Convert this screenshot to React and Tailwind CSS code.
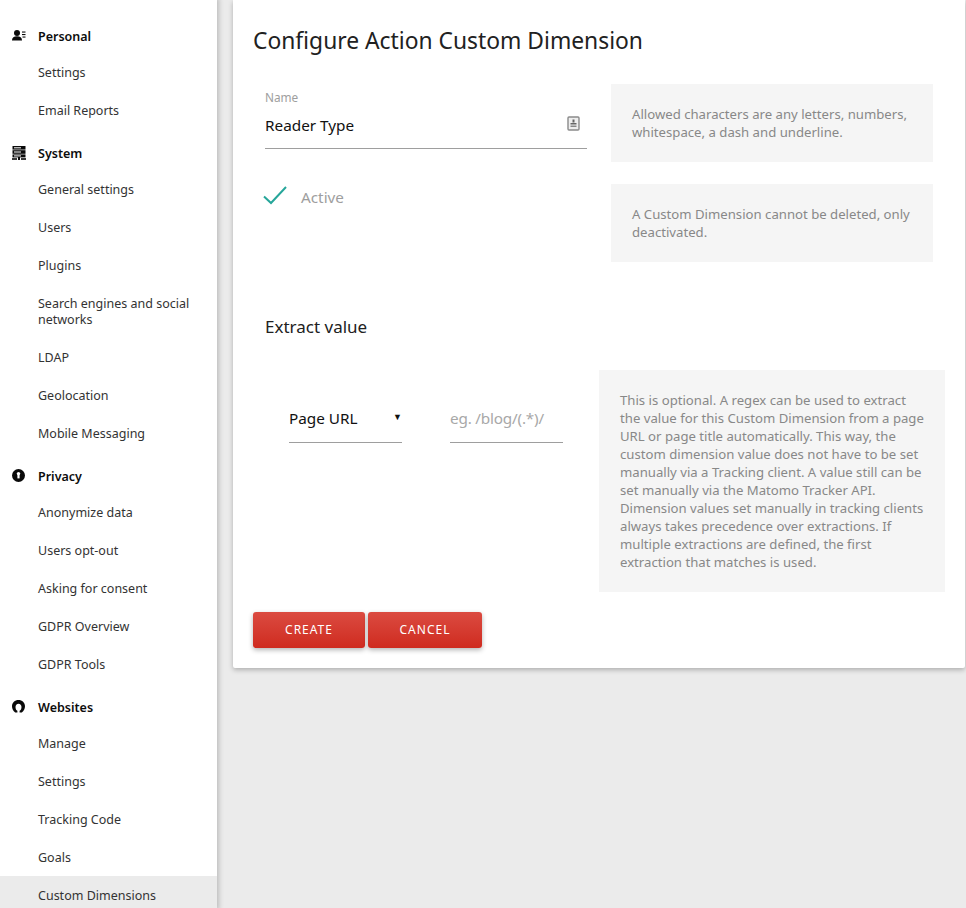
const groups = [
  { title: "Personal", icon: "person", items: ["Settings", "Email Reports"] },
  { title: "System", icon: "server", items: ["General settings", "Users", "Plugins", "Search engines and social networks", "LDAP", "Geolocation", "Mobile Messaging"] },
  { title: "Privacy", icon: "key", items: ["Anonymize data", "Users opt-out", "Asking for consent", "GDPR Overview", "GDPR Tools"] },
  { title: "Websites", icon: "arch", items: ["Manage", "Settings", "Tracking Code", "Goals", "Custom Dimensions"] },
];

function GroupIcon({ name }) {
  if (name === "person")
    return (
      <svg width="14" height="12" viewBox="0 0 14 12" fill="#0a0a0a">
        <circle cx="5" cy="3" r="3" />
        <path d="M0 10.5c0-3 2-4.2 5-4.2s5 1.2 5 4.2z" />
        <rect x="10" y="1.5" width="3.5" height="1.1" />
        <rect x="10" y="4" width="3.5" height="1.1" />
        <rect x="10.5" y="6.5" width="3" height="1.1" />
      </svg>
    );
  if (name === "server")
    return (
      <svg width="14" height="14" viewBox="0 0 14 14" fill="#0a0a0a">
        <rect x="0.5" y="0" width="13" height="3.6" />
        <rect x="0.5" y="4.2" width="13" height="3.6" />
        <rect x="0.5" y="8.4" width="13" height="3" />
        <rect x="0" y="12.2" width="5" height="1.6" />
        <rect x="9" y="12.2" width="5" height="1.6" />
        <rect x="6" y="11" width="2" height="3" />
        <rect x="2" y="1.3" width="7" height="1" fill="#fff" />
        <rect x="2" y="5.5" width="7" height="1" fill="#fff" />
        <rect x="2" y="9.4" width="7" height="1" fill="#fff" />
      </svg>
    );
  if (name === "key")
    return (
      <svg width="13" height="13" viewBox="0 0 13 13">
        <circle cx="6.5" cy="6.5" r="6.5" fill="#0a0a0a" />
        <circle cx="6.5" cy="4.6" r="1.7" fill="#fff" />
        <rect x="5.4" y="4.8" width="2.2" height="4.6" fill="#fff" />
      </svg>
    );
  return (
    <svg width="13" height="13" viewBox="0 0 13 13" fill="#0a0a0a">
      <path d="M6.5 0C2.9 0 0 2.7 0 6.2c0 2.5 1.2 4.7 3.2 6.3h2.2V10.8C4.2 10.3 3.5 8.8 3.5 7c0-2 1.2-3.3 3-3.3s3 1.3 3 3.3c0 1.8-.7 3.3-1.9 3.8v1.7h2.2c2-1.6 3.2-3.8 3.2-6.3C13 2.7 10.1 0 6.5 0z" />
    </svg>
  );
}

function Help({ className, children }) {
  return (
    <div className={"bg-[#f5f5f5] text-[13.17px] leading-[18px] text-[#888888] " + className}>
      {children}
    </div>
  );
}

export default function App() {
  return (
    <div
      className="flex h-[908px] w-[966px] overflow-hidden bg-[#ebebeb] text-[#212121]"
      style={{ fontFamily: '"Noto Sans", sans-serif' }}
    >
      <aside className="relative h-[908px] w-[217px] shrink-0 overflow-hidden bg-white pt-[19px] shadow-[0_0_5px_2px_rgba(0,0,0,0.2)]">
        {groups.map((g) => (
          <div key={g.title} className="mb-[7px]">
            <div className="flex h-[34px] items-center pb-[1px] text-[12.5px] font-semibold text-[#0d0d0d]">
              <span className="flex w-[38px] shrink-0 items-center pl-[12px]">
                <GroupIcon name={g.icon} />
              </span>
              <span className="mt-[4px]">{g.title}</span>
            </div>
            {g.items.map((it) => (
              <div
                key={it}
                className={
                  "pb-[10px] pl-[38px] pr-[20px] pt-[12px] text-[12.5px] leading-[16px] text-[#333333] " +
                  (it === "Custom Dimensions" ? "bg-[#ebebeb]" : "")
                }
              >
                {it}
              </div>
            ))}
          </div>
        ))}
      </aside>

      <main className="ml-[16px] w-[732px]">
        <div className="h-[668px] rounded-b-[2px] bg-white pl-[20px] shadow-[0_2px_5px_0_rgba(0,0,0,0.26)]">
          <h2 className="pt-[25px] text-[22.83px] leading-[32px] text-[#212121]">Configure Action Custom Dimension</h2>

          <div className="mt-[27px] flex pl-[12px]">
            <div className="relative h-[65px] w-[322px] border-b border-[#9e9e9e]">
              <div className="mt-[6px] text-[11.8px] leading-[14px] text-[#9e9e9e]">Name</div>
              <div className="mt-[10px] text-[15.3px] leading-[22px] text-[#111111]">Reader Type</div>
              <svg className="absolute right-[7px] top-[32px]" width="13" height="15" viewBox="0 0 13 15">
                <rect x="1" y="1" width="11" height="13" rx="1" fill="#eeeeee" stroke="#8a8a8a" strokeWidth="1.4" />
                <rect x="5.5" y="3.5" width="2" height="3" fill="#666" />
                <rect x="3.5" y="7" width="6" height="1.5" fill="#666" />
                <rect x="3.5" y="9.5" width="6" height="1.5" fill="#888" />
              </svg>
            </div>
            <Help className="ml-[24px] h-[78px] w-[322px] px-[21px] pt-[21px]">
              Allowed characters are any letters, numbers, whitespace, a dash and underline.
            </Help>
          </div>

          <div className="mt-[22px] flex pl-[12px]">
            <div className="flex w-[322px] items-start">
              <svg className="ml-[-3px] mt-[1px]" width="25" height="20" viewBox="0 0 25 20" fill="none">
                <path d="M2 11.5 L9 18 L24 2" stroke="#26a69a" strokeWidth="2" />
              </svg>
              <span className="ml-[14px] mt-[2px] text-[15.3px] leading-[22px] text-[#9e9e9e]">Active</span>
            </div>
            <Help className="ml-[24px] h-[78px] w-[322px] px-[21px] pt-[21px]">
              A Custom Dimension cannot be deleted, only deactivated.
            </Help>
          </div>

          <h3 className="mt-[52px] pl-[12px] text-[17px] leading-[26px] text-[#212121]">Extract value</h3>

          <div className="mt-[30px] flex">
            <div className="flex pl-[36px] pt-[34px]">
              <div className="relative h-[39px] w-[113px] border-b border-[#9e9e9e] pt-[3px] text-[15.3px] leading-[22px] text-[#111111]">
                Page URL
                <span className="absolute right-0 top-[7px] text-[9px] leading-[12px]">▼</span>
              </div>
              <div className="ml-[48px] h-[39px] w-[113px] border-b border-[#9e9e9e] pt-[3px] text-[15.3px] leading-[22px] tracking-[-0.2px] text-[#a8a8a8]">
                eg. /blog/(.*)/
              </div>
            </div>
            <Help className="ml-[36px] h-[222px] w-[346px] pb-[20px] pl-[21px] pr-[17px] pt-[21px]">
              This is optional. A regex can be used to extract the value for this Custom Dimension from a page URL or page title automatically. This way, the custom dimension value does not have to be set manually via a Tracking client. A value still can be set manually via the Matomo Tracker API. Dimension values set manually in tracking clients always takes precedence over extractions. If multiple extractions are defined, the first extraction that matches is used.
            </Help>
          </div>

          <div className="mt-[20px] flex gap-[3px]">
            <button className="h-[36px] w-[112px] rounded-[3px] bg-gradient-to-b from-[#db4a40] to-[#cf2a1e] text-[12px] tracking-[1px] text-white shadow-[0_2px_5px_0_rgba(0,0,0,0.3)]">CREATE</button>
            <button className="h-[36px] w-[114px] rounded-[3px] bg-gradient-to-b from-[#db4a40] to-[#cf2a1e] text-[12px] tracking-[1px] text-white shadow-[0_2px_5px_0_rgba(0,0,0,0.3)]">CANCEL</button>
          </div>
        </div>
      </main>
    </div>
  );
}
